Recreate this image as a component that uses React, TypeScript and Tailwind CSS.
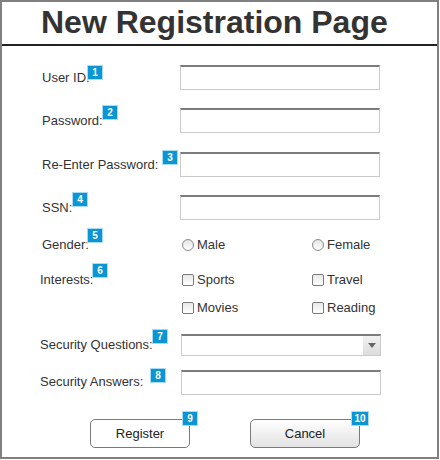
import React from "react";

const badges = [
  { n: "1", cls: "left-[85px] top-[63px] w-[16px]" },
  { n: "2", cls: "left-[100px] top-[103px] w-[16px]" },
  { n: "3", cls: "left-[160px] top-[148px] w-[16px]" },
  { n: "4", cls: "left-[70px] top-[190px] w-[16px]" },
  { n: "5", cls: "left-[85px] top-[226px] w-[16px]" },
  { n: "6", cls: "left-[90px] top-[261px] w-[16px]" },
  { n: "7", cls: "left-[150px] top-[327px] w-[16px]" },
  { n: "8", cls: "left-[148px] top-[366px] w-[16px]" },
  { n: "9", cls: "left-[180px] top-[409px] w-[16px]" },
  { n: "10", cls: "left-[349px] top-[409px] w-[18px]" },
];

const TextBox = ({ className = "" }: { className?: string }) => (
  <div
    className={
      "shrink-0 w-[200px] h-[25px] bg-white border border-[#cacaca] border-t-2 border-t-[#7c7c7c] " +
      className
    }
  />
);

const Radio = ({ label }: { label: string }) => (
  <div className="shrink-0 w-[130px] flex items-center gap-[3px]">
    <span className="shrink-0 w-[12px] h-[12px] rounded-full border border-[#8a8a8a] bg-gradient-to-b from-[#e4e4e4] to-white" />
    <span>{label}</span>
  </div>
);

const Check = ({ label }: { label: string }) => (
  <div className="shrink-0 w-[130px] flex items-center gap-[3px]">
    <span className="shrink-0 w-[12px] h-[12px] rounded-[2px] border border-[#7a7a7a] bg-gradient-to-b from-[#e8e8e8] to-white" />
    <span>{label}</span>
  </div>
);

export default function App() {
  return (
    <div className="relative w-[439px] h-[459px] border-2 border-[#808080] bg-white text-[13px] text-[#333] font-['Liberation_Sans',Arial,sans-serif]">
      {/* Header */}
      <h1 className="pt-[2px] pl-[39px] text-[32px] leading-[36px] font-bold text-[#333]">
        New Registration Page
      </h1>
      <div className="mt-[4px] h-[2px] bg-[#222]" />

      {/* Form rows */}
      <div className="flex flex-col">
        <div className="mt-[19px] flex items-center h-[25px]">
          <div className="shrink-0 w-[178px] pl-[40px]">User ID:</div>
          <TextBox />
        </div>
        <div className="mt-[18px] flex items-center h-[25px]">
          <div className="shrink-0 w-[178px] pl-[40px]">Password:</div>
          <TextBox />
        </div>
        <div className="mt-[19px] flex items-center h-[25px]">
          <div className="shrink-0 w-[178px] pl-[40px]">Re-Enter Password:</div>
          <TextBox />
        </div>
        <div className="mt-[18px] flex items-center h-[25px]">
          <div className="shrink-0 w-[178px] pl-[40px]">SSN:</div>
          <TextBox />
        </div>

        <div className="mt-[13px] flex items-center h-[24px]">
          <div className="shrink-0 w-[178px] pl-[40px]">Gender:</div>
          <div className="shrink-0 ml-[2px] flex">
            <Radio label="Male" />
            <Radio label="Female" />
          </div>
        </div>
        <div className="mt-[11px] flex items-center h-[24px]">
          <div className="shrink-0 w-[178px] pl-[38px]">Interests:</div>
          <div className="shrink-0 ml-[2px] flex">
            <Check label="Sports" />
            <Check label="Travel" />
          </div>
        </div>
        <div className="mt-[4px] flex items-center h-[24px]">
          <div className="shrink-0 w-[178px]" />
          <div className="shrink-0 ml-[2px] flex">
            <Check label="Movies" />
            <Check label="Reading" />
          </div>
        </div>

        <div className="mt-[14px] flex items-center h-[22px]">
          <div className="shrink-0 w-[179px] pl-[38px]">Security Questions:</div>
          <div className="shrink-0 w-[200px] h-[22px] flex bg-white border border-[#cacaca] border-t-2 border-t-[#7c7c7c]">
            <div className="flex-1" />
            <div className="w-[17px] flex items-center justify-center bg-gradient-to-b from-[#f2f2f2] to-[#dcdcdc]">
              <svg width="8" height="5" viewBox="0 0 8 5">
                <path d="M0 0 L8 0 L4 5 Z" fill="#666" />
              </svg>
            </div>
          </div>
        </div>
        <div className="mt-[14px] flex items-center h-[24px]">
          <div className="shrink-0 w-[179px] pl-[38px]">Security Answers:</div>
          <TextBox className="h-[24px]" />
        </div>

        <div className="mt-[25px] flex h-[29px]">
          <button className="shrink-0 ml-[88px] w-[100px] h-[29px] rounded-[5px] border border-[#7a7a7a] bg-white text-[#222]">
            Register
          </button>
          <button className="shrink-0 ml-[60px] w-[110px] h-[29px] rounded-[5px] border border-[#7a7a7a] bg-gradient-to-b from-white to-[#e2e2e2] text-[#222]">
            Cancel
          </button>
        </div>
      </div>

      {/* Numbered callouts */}
      {badges.map((b) => (
        <div
          key={b.n}
          className={
            "absolute h-[15px] flex items-center justify-center bg-[#0a96d4] border border-[#a9dcf3] text-white text-[10px] font-bold leading-none " +
            b.cls
          }
        >
          {b.n}
        </div>
      ))}
    </div>
  );
}
